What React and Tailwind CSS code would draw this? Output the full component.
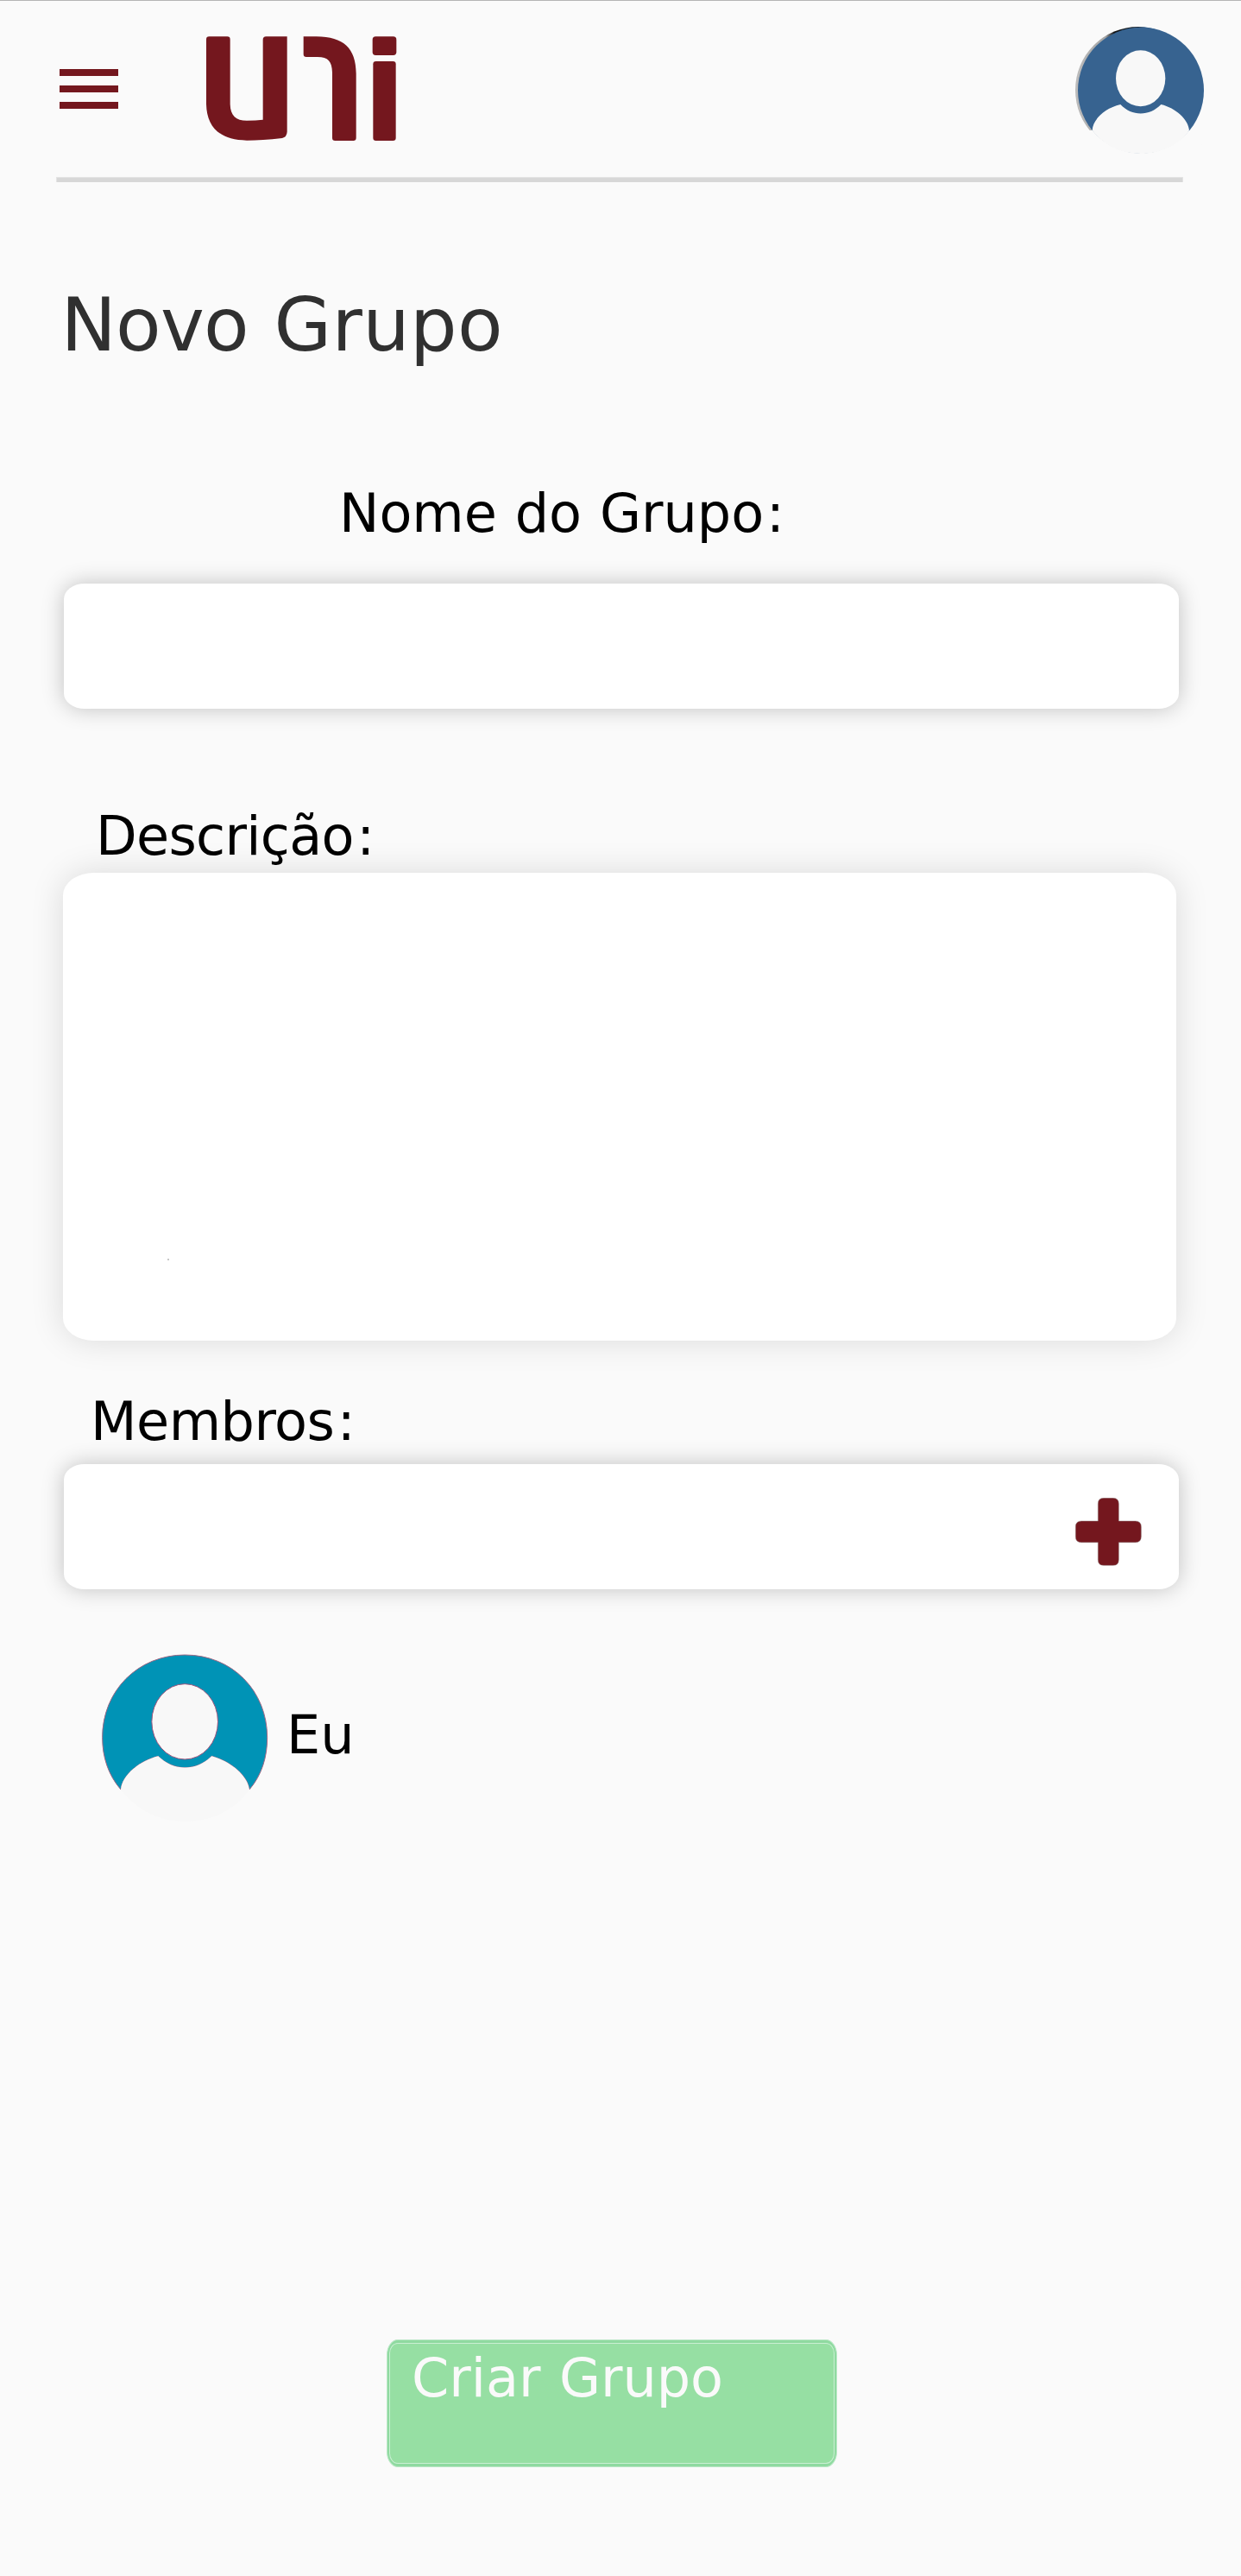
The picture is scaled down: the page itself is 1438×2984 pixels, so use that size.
import React from "react";

function MenuIcon() {
  return (
    <button aria-label="Menu" className="mt-[79px] ml-[69px] flex h-[46px] w-[68px] flex-col justify-between">
      <span className="h-2 w-full bg-[#74171e]" />
      <span className="h-2 w-full bg-[#74171e]" />
      <span className="h-2 w-full bg-[#74171e]" />
    </button>
  );
}

function Logo() {
  return (
    <svg viewBox="597 126 663 364" className="mt-[41px] ml-[102px] h-[121.33px] w-[221px] shrink-0" fill="#74171e">
      <path d="M597 137Q597 127 607 127H670Q680 127 680 137V362C681 402 700 419 738 419Q770 419 794 416V138Q794 127 805 127H878V458Q877 476 861 480Q790 488 738 488C643 487 599 440 597 362Z" />
      <path d="M935 127H980C1075 128 1117 168 1118 255V479Q1118 489 1108 489H1045Q1035 489 1035 479V252C1034 214 1021 198 984 198H945Q935 198 935 188Z" />
      <rect x="1175" y="127" width="83" height="65" rx="11" />
      <rect x="1177" y="213" width="79" height="276" rx="10" />
    </svg>
  );
}

function ProfileAvatar() {
  return (
    <svg viewBox="137 92 448 442" className="mt-[30px] ml-auto mr-[43px] h-[147.33px] w-[149.33px] shrink-0">
      <defs>
        <linearGradient id="rim" x1="0" y1="0" x2="1" y2="0">
          <stop offset="0" stopColor="#bcbcbc" />
          <stop offset="0.24" stopColor="#a5a5a5" />
          <stop offset="0.31" stopColor="#111111" />
          <stop offset="0.5" stopColor="#1b2733" />
          <stop offset="0.56" stopColor="#376390" />
        </linearGradient>
        <clipPath id="rimClip">
          <path d="M130 80H420V300H200V456H130Z" />
        </clipPath>
      </defs>
      <ellipse cx="356" cy="312" rx="219" ry="220" fill="url(#rim)" clipPath="url(#rimClip)" />
      <ellipse cx="365" cy="313" rx="219" ry="219" fill="#376390" />
      <path d="M196 452C198 414 239 375 294 362C334 404 394 404 435 362C486 374 530 414 533 452C499 504 434 533 364 533C295 533 239 507 196 452Z" fill="#f8f8f8" />
      <path d="M533 452L600 452L560 540L150 540L150 452L196 452C239 507 295 533 364 533C434 533 499 504 533 452Z" fill="#fafafa" />
      <ellipse cx="364" cy="271.500" rx="86" ry="97.500" fill="#f8f8f8" />
    </svg>
  );
}

function MemberAvatar() {
  return (
    <svg viewBox="53 78 578 585" className="h-[195px] w-[192.67px] shrink-0">
      <path
        d="M119 549C75 498 55 436 55 368C55 206 178 81 342 81C506 81 628 206 628 368C628 436 609 499 566 549C560 500 500 450 435 433C382 486 302 486 249 433C187 448 124 497 119 549Z"
        fill="#0093b6"
        stroke="#a06583"
        strokeWidth="3"
      />
      <path d="M119 549C124 497 187 448 249 433C302 486 382 486 435 433C500 450 560 500 566 549C512 625 430 660 342 660C255 660 174 622 119 549Z" fill="#f8f8f8" />
      <ellipse cx="341.500" cy="313" rx="115" ry="131" fill="#f8f8f8" stroke="#a0527a" strokeWidth="3" />
    </svg>
  );
}

function PlusIcon() {
  return (
    <svg viewBox="139 765 230 236" className="h-[78.67px] w-[76.67px]" fill="#74171e" stroke="#8a7474" strokeWidth="1.5">
      <path d="M238 766H270Q290 766 290 786V846H348Q368 846 368 866V900Q368 920 348 920H290V980Q290 1000 270 1000H238Q218 1000 218 980V920H160Q140 920 140 900V866Q140 846 160 846H218V786Q218 766 238 766Z" />
    </svg>
  );
}

export default function App() {
  return (
    <div className="flex h-[2984px] w-[1438px] flex-col overflow-hidden border-t border-[#b5b5b5] bg-[#fafafa] font-['DejaVu_Sans',sans-serif] text-[62px] leading-[72px] text-black">
      <header className="flex h-[204px] shrink-0 items-start">
        <MenuIcon />
        <Logo />
        <ProfileAvatar />
      </header>
      <div className="ml-[65px] h-[6px] w-[1306px] shrink-0 border border-b-0 border-[#e4e4e4] bg-[#d7d7d7]" />

      <main className="flex flex-col items-start">
        <h1 className="mt-[115px] ml-[70.5px] text-[86px] leading-[100px] tracking-[0.3px] text-[#303030] [word-spacing:2px]">
          <span className="tracking-[-0.75px]">Novo</span> Grupo
        </h1>

        <label className="mt-[133px] ml-[393px] [word-spacing:1.2px]">
          Nome do Grupo<span className="ml-[3px]">:</span>
        </label>
        <div className="mt-[45px] ml-[74px] h-[145px] w-[1292px] rounded-[24px/18px] bg-white shadow-[0_0_26px_rgba(0,0,0,0.23)]" />

        <label className="mt-[112px] ml-[111px] tracking-[-0.7px]">
          Descrição<span className="ml-[3.5px]">:</span>
        </label>
        <div className="mt-[5.5px] ml-[73px] h-[542.5px] w-[1290px] rounded-[36px/26px] bg-white pt-[447px] pl-[121px] shadow-[0_0_38px_rgba(0,0,0,0.13)]">
          <div className="size-[2px] rounded-full bg-[#b5b5b5]" />
        </div>

        <label className="mt-[58px] ml-[105px] tracking-[-0.5px]">
          Membros<span className="ml-[3.5px]">:</span>
        </label>
        <div className="mt-[13px] ml-[74px] flex h-[145px] w-[1292px] items-start justify-end rounded-[24px/18px] bg-white pt-[39px] pr-[43px] shadow-[0_0_26px_rgba(0,0,0,0.23)]">
          <PlusIcon />
        </div>

        <div className="mt-[75px] ml-[118px] flex items-start">
          <MemberAvatar />
          <span className="mt-[58px] ml-[21.33px]">Eu</span>
        </div>

        <button className="mt-[599px] ml-[448px] h-[148px] w-[522px] rounded-[13px/18px] border border-[#b9e7c5] bg-[#8fdaa0] px-[2px] py-[3px]">
          <span className="block h-full w-full rounded-[10px/12px] border border-[#c9efd2] bg-[#96dfa3] pt-[4px] pl-[25px] text-left text-[#fafafa] [word-spacing:1.7px]">
            Criar Grupo
          </span>
        </button>
      </main>
    </div>
  );
}
